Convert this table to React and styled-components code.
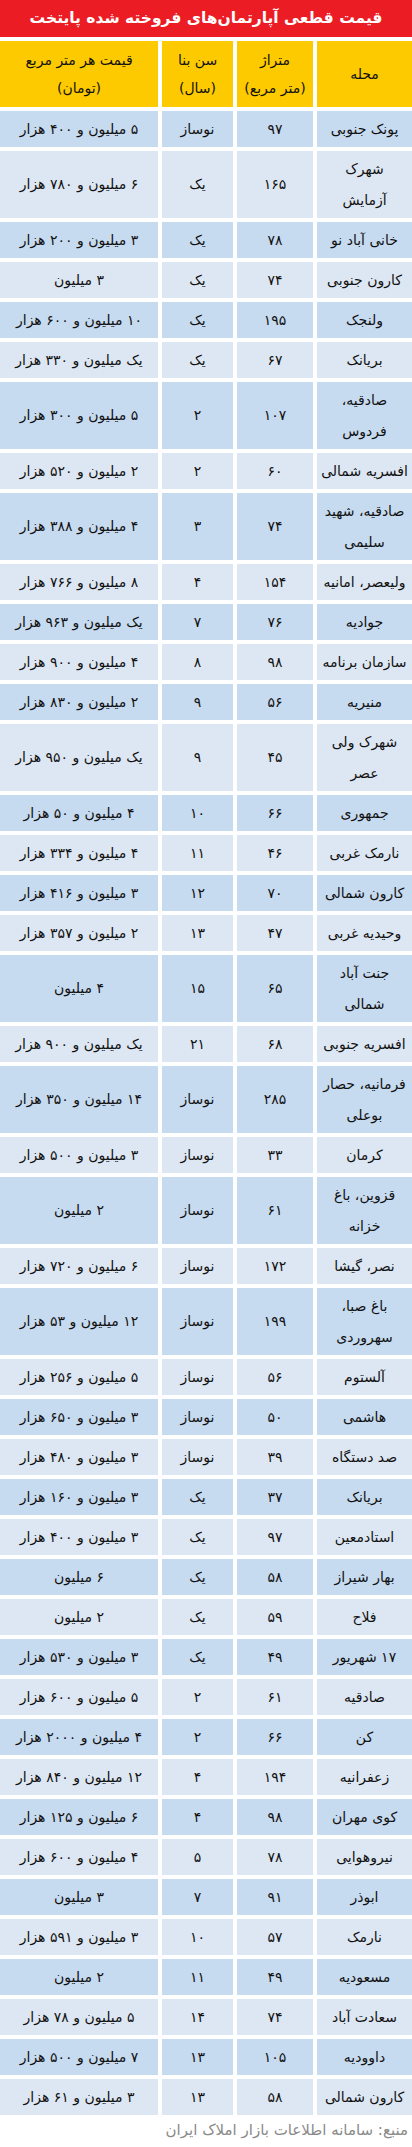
import styled, { createGlobalStyle } from "styled-components";

const GlobalStyle = createGlobalStyle`
  body {
    margin: 0;
    background: #ffffff;
    font-family: "DejaVu Sans", "Noto Sans", sans-serif;
  }
`;

// name (may wrap with \n), area, age, price
const rows = [
  ["پونک جنوبی", "۹۷", "نوساز", "۵ میلیون و ۴۰۰ هزار"],
  ["شهرک\nآزمایش", "۱۶۵", "یک", "۶ میلیون و ۷۸۰ هزار"],
  ["خانی آباد نو", "۷۸", "یک", "۳ میلیون و ۲۰۰ هزار"],
  ["کارون جنوبی", "۷۴", "یک", "۳ میلیون"],
  ["ولنجک", "۱۹۵", "یک", "۱۰ میلیون و ۶۰۰ هزار"],
  ["بریانک", "۶۷", "یک", "یک میلیون و ۳۳۰ هزار"],
  ["صادقیه،\nفردوس", "۱۰۷", "۲", "۵ میلیون و ۳۰۰ هزار"],
  ["افسریه شمالی", "۶۰", "۲", "۲ میلیون و ۵۲۰ هزار"],
  ["صادقیه، شهید\nسلیمی", "۷۴", "۳", "۴ میلیون و ۳۸۸ هزار"],
  ["ولیعصر، امانیه", "۱۵۴", "۴", "۸ میلیون و ۷۶۶ هزار"],
  ["جوادیه", "۷۶", "۷", "یک میلیون و ۹۶۳ هزار"],
  ["سازمان برنامه", "۹۸", "۸", "۴ میلیون و ۹۰۰ هزار"],
  ["منیریه", "۵۶", "۹", "۲ میلیون و ۸۳۰ هزار"],
  ["شهرک ولی\nعصر", "۴۵", "۹", "یک میلیون و ۹۵۰ هزار"],
  ["جمهوری", "۶۶", "۱۰", "۴ میلیون و ۵۰ هزار"],
  ["نارمک غربی", "۴۶", "۱۱", "۴ میلیون و ۳۳۴ هزار"],
  ["کارون شمالی", "۷۰", "۱۲", "۳ میلیون و ۴۱۶ هزار"],
  ["وحیدیه غربی", "۴۷", "۱۳", "۲ میلیون و ۳۵۷ هزار"],
  ["جنت آباد\nشمالی", "۶۵", "۱۵", "۴ میلیون"],
  ["افسریه جنوبی", "۶۸", "۲۱", "یک میلیون و ۹۰۰ هزار"],
  ["فرمانیه، حصار\nبوعلی", "۲۸۵", "نوساز", "۱۴ میلیون و ۳۵۰ هزار"],
  ["کرمان", "۳۳", "نوساز", "۳ میلیون و ۵۰۰ هزار"],
  ["قزوین، باغ\nخزانه", "۶۱", "نوساز", "۲ میلیون"],
  ["نصر، گیشا", "۱۷۲", "نوساز", "۶ میلیون و ۷۲۰ هزار"],
  ["باغ صبا،\nسهروردی", "۱۹۹", "نوساز", "۱۲ میلیون و ۵۳ هزار"],
  ["آلستوم", "۵۶", "نوساز", "۵ میلیون و ۲۵۶ هزار"],
  ["هاشمی", "۵۰", "نوساز", "۳ میلیون و ۶۵۰ هزار"],
  ["صد دستگاه", "۳۹", "نوساز", "۳ میلیون و ۴۸۰ هزار"],
  ["بریانک", "۳۷", "یک", "۳ میلیون و ۱۶۰ هزار"],
  ["استادمعین", "۹۷", "یک", "۳ میلیون و ۴۰۰ هزار"],
  ["بهار شیراز", "۵۸", "یک", "۶ میلیون"],
  ["فلاح", "۵۹", "یک", "۲ میلیون"],
  ["۱۷ شهریور", "۴۹", "یک", "۳ میلیون و ۵۳۰ هزار"],
  ["صادقیه", "۶۱", "۲", "۵ میلیون و ۶۰۰ هزار"],
  ["کن", "۶۶", "۲", "۴ میلیون و ۲۰۰۰ هزار"],
  ["زعفرانیه", "۱۹۴", "۴", "۱۲ میلیون و ۸۴۰ هزار"],
  ["کوی مهران", "۹۸", "۴", "۶ میلیون و ۱۲۵ هزار"],
  ["نیروهوایی", "۷۸", "۵", "۴ میلیون و ۶۰۰ هزار"],
  ["ابوذر", "۹۱", "۷", "۳ میلیون"],
  ["نارمک", "۵۷", "۱۰", "۳ میلیون و ۵۹۱ هزار"],
  ["مسعودیه", "۴۹", "۱۱", "۲ میلیون"],
  ["سعادت آباد", "۷۴", "۱۴", "۵ میلیون و ۷۸ هزار"],
  ["داوودیه", "۱۰۵", "۱۳", "۷ میلیون و ۵۰۰ هزار"],
  ["کارون شمالی", "۵۸", "۱۳", "۳ میلیون و ۶۱ هزار"],
];

const Page = styled.div`
  width: 412px;
  direction: rtl;
  font-family: "DejaVu Sans", "Noto Sans", sans-serif;
`;

const TitleBar = styled.h1`
  margin: 0 0 4px;
  height: 37px;
  line-height: 37px;
  background: #ec1c24;
  color: #ffffff;
  font-size: 15.5px;
  font-weight: bold;
  text-align: center;
  white-space: nowrap;
  overflow: hidden;
`;

const Table = styled.div`
  display: grid;
  grid-template-columns: 95px 76px 71px 158px;
  gap: 4px;
`;

const tones = {
  head: "#fdca00",
  dark: "#c6daf0",
  light: "#dde7f3",
};

const Cell = styled.div`
  display: flex;
  align-items: center;
  justify-content: center;
  text-align: center;
  white-space: pre;
  overflow: hidden;
  background: ${(p) => tones[p.$tone]};
  color: #111111;
  font-size: 14px;
  line-height: 31px;
  padding: 2.5px 0;
`;

const HeadCell = styled(Cell)`
  line-height: 28px;
  padding: 5px 0;
`;

const Source = styled.p`
  margin: 4px 4px 0 0;
  color: #8a8a8a;
  font-size: 15px;
  line-height: 22px;
  text-align: right;
  white-space: nowrap;
`;

const App = () => {
  return (
    <Page>
      <GlobalStyle />
      <TitleBar>قیمت قطعی آپارتمان‌های فروخته شده پایتخت</TitleBar>
      <Table>
        <HeadCell $tone="head">محله</HeadCell>
        <HeadCell $tone="head">{"متراژ\n(متر مربع)"}</HeadCell>
        <HeadCell $tone="head">{"سن بنا\n(سال)"}</HeadCell>
        <HeadCell $tone="head">{"قیمت هر متر مربع\n(تومان)"}</HeadCell>
        {rows.map((row, i) =>
          row.map((text, j) => (
            <Cell key={`${i}-${j}`} $tone={i % 2 === 0 ? "dark" : "light"}>
              {text}
            </Cell>
          ))
        )}
      </Table>
      <Source>منبع: سامانه اطلاعات بازار املاک ایران</Source>
    </Page>
  );
};

export default App;
